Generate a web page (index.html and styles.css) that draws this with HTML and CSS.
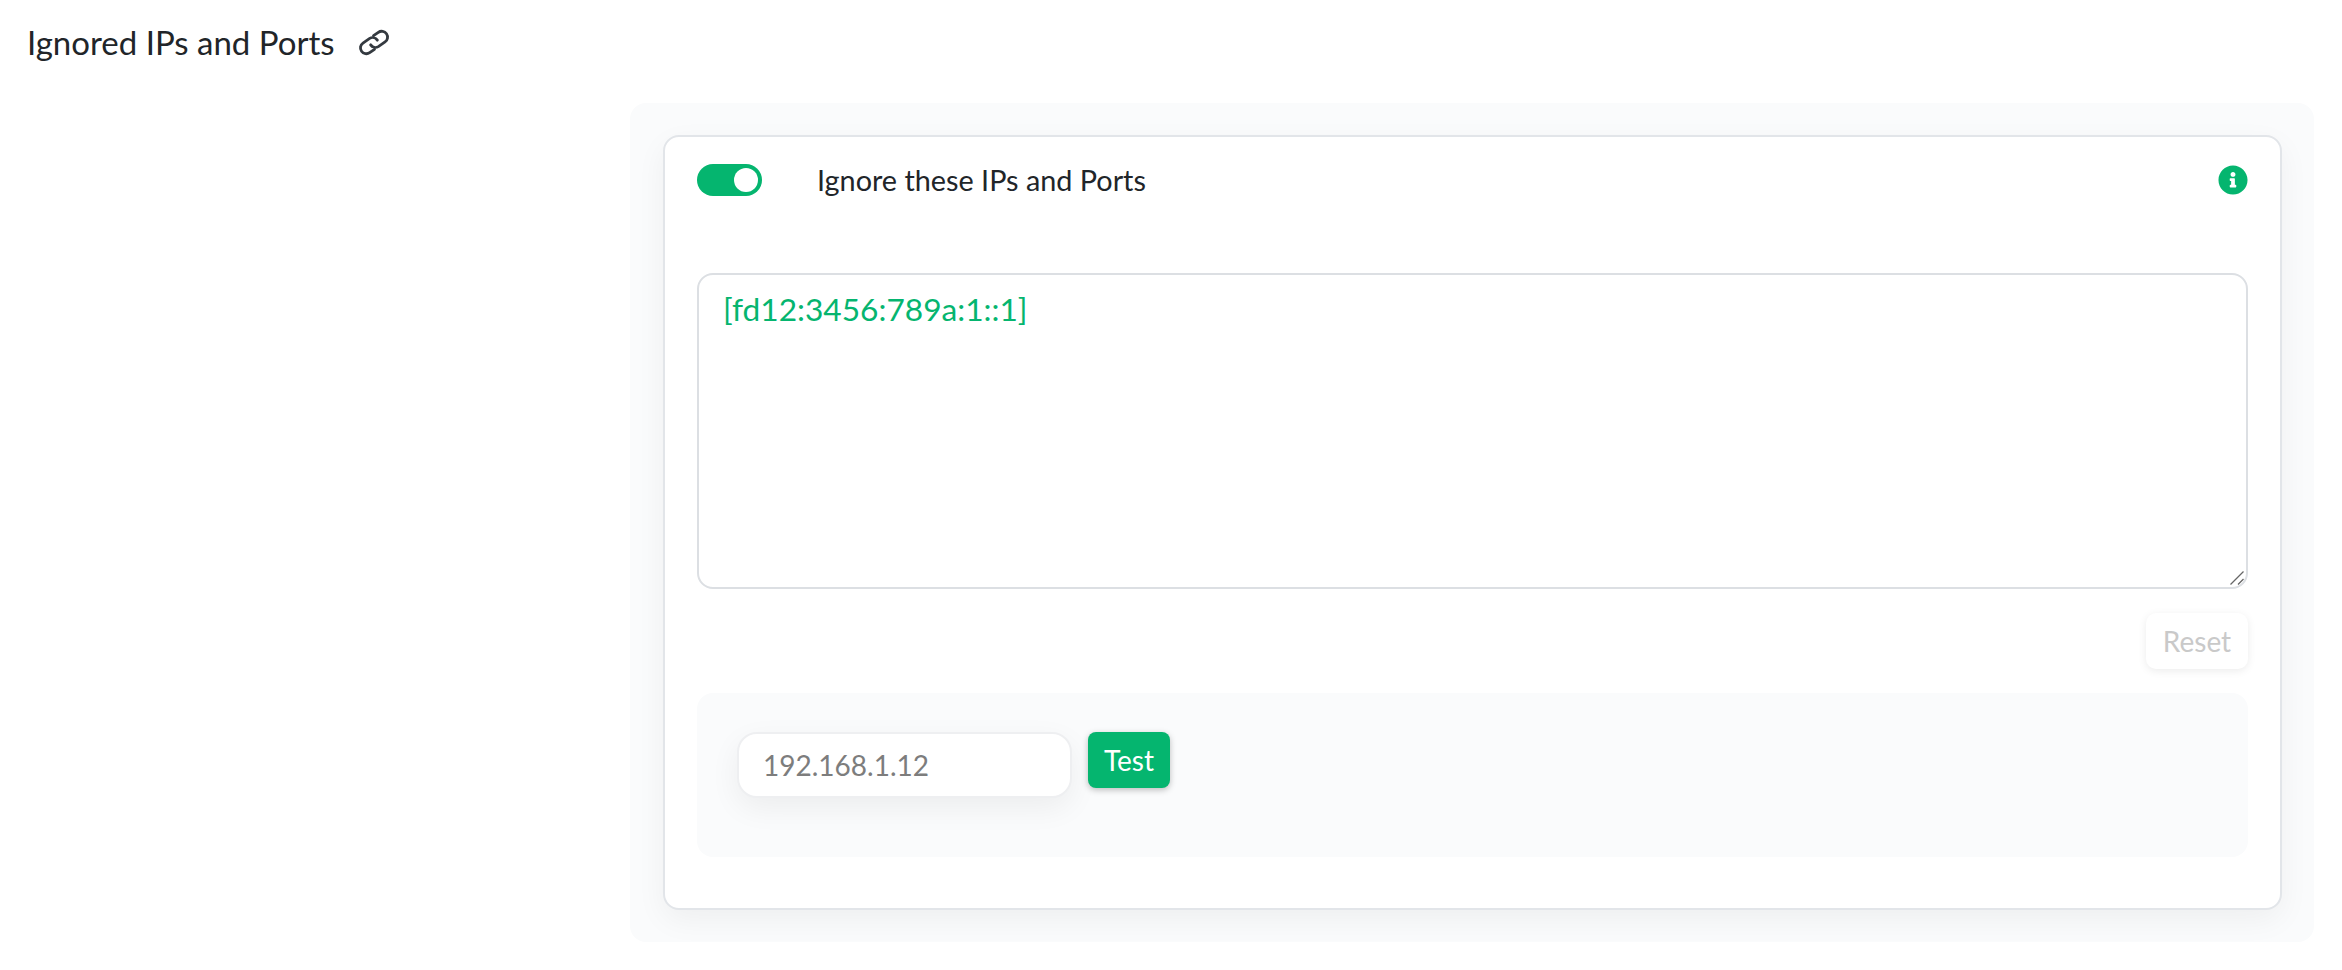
FILE: index.html
```html
<!DOCTYPE html>
<html lang="en">
<head>
  <meta charset="UTF-8">
  <title>Ignored IPs and Ports</title>
  <link rel="stylesheet" href="styles.css">
</head>
<body>
  <div class="heading">
    <h2>Ignored IPs and Ports</h2>
    <a class="anchor" href="#">
      <svg viewBox="-14.500 -11.500 29 23" width="34" height="27">
        <g transform="rotate(-35)" fill="none" stroke="#343a40" stroke-width="2.400" stroke-linecap="round">
          <path d="M3.500 0A5 5 0 0 0-1-5H-8A5 5 0 0 0-8 5H-3"/>
          <path d="M-3.500 0A5 5 0 0 0 1 5H8A5 5 0 0 0 8-5H3"/>
        </g>
      </svg>
    </a>
  </div>

  <div class="panel">
    <div class="card">
      <div class="option-row">
        <label class="toggle"><span class="toggle-knob"></span></label>
        <span class="option-label">Ignore these IPs and Ports</span>
        <svg class="info-icon" viewBox="0 0 512 512" width="30" height="30"><path fill="#05b56f" d="M256 8C119 8 8 119.100 8 256c0 137 111 248 248 248s248-111 248-248C504 119.100 393 8 256 8zm0 110c23.200 0 42 18.800 42 42s-18.800 42-42 42-42-18.800-42-42 18.800-42 42-42zm56 254c0 6.600-5.400 12-12 12h-88c-6.600 0-12-5.400-12-12v-24c0-6.600 5.400-12 12-12h12v-64h-12c-6.600 0-12-5.400-12-12v-24c0-6.600 5.400-12 12-12h64c6.600 0 12 5.400 12 12v100h12c6.600 0 12 5.400 12 12v24z"/></svg>
      </div>

      <div class="ip-wrap">
        <textarea class="ip-list" spellcheck="false">[fd12:3456:789a:1::1]</textarea>
        <svg class="grip" viewBox="0 0 14 14" width="14" height="14">
          <path d="M0.500 13.500L13.500 0.500M8 13.500L13.500 8" stroke="#666" stroke-width="1.300" fill="none"/>
        </svg>
      </div>

      <div class="actions">
        <button class="btn-reset" disabled>Reset</button>
      </div>

      <div class="test-box">
        <input class="test-input" type="text" placeholder="192.168.1.12">
        <button class="btn-test">Test</button>
      </div>
    </div>
  </div>
</body>
</html>
```

FILE: styles.css
```css
body {
  margin: 0;
  background: #fff;
  color: #212529;
  font-family: 'Lato', sans-serif;
}

.heading {
  display: flex;
  align-items: center;
  gap: 22px;
  padding-left: 27px;
  height: 84px;
  margin-bottom: 19px;
}

.heading h2 {
  margin: 0;
  font-size: 33px;
  font-weight: 400;
  line-height: 40px;
}

.anchor {
  display: flex;
}

.panel {
  margin: 0 28px 0 630px;
  padding: 32px 32px 32px 33px;
  background: #fafbfc;
  border-radius: 16px;
  overflow: hidden;
}

.card {
  background: #fff;
  border: 2px solid #e2e5e9;
  border-radius: 16px;
  padding: 27px 32px 51px;
  box-shadow: 0 10px 30px rgba(0, 0, 0, 0.05);
}

.option-row {
  display: flex;
  align-items: center;
  height: 32px;
  margin-bottom: 77px;
}

.toggle {
  position: relative;
  display: block;
  width: 65px;
  height: 32px;
  border-radius: 16px;
  background: #05b56f;
}

.toggle-knob {
  position: absolute;
  top: 4px;
  right: 4px;
  width: 24px;
  height: 24px;
  border-radius: 50%;
  background: #fff;
}

.option-label {
  margin-left: 55px;
  font-size: 28.800px;
}

.info-icon {
  margin-left: auto;
}

.ip-wrap {
  position: relative;
}

.ip-list {
  display: block;
  width: 100%;
  height: 316px;
  box-sizing: border-box;
  padding: 14px 24px;
  border: 2px solid #dcdfe3;
  border-radius: 16px;
  outline: none;
  resize: none;
  color: #05b56f;
  font-family: 'Lato', sans-serif;
  font-size: 31.700px;
  line-height: 40px;
}

.grip {
  position: absolute;
  right: 4px;
  bottom: 4px;
  pointer-events: none;
}

.actions {
  display: flex;
  justify-content: flex-end;
  margin: 24px 0;
}

.btn-reset {
  width: 102px;
  height: 56px;
  border: none;
  border-radius: 10px;
  background: #fff;
  color: #c9c9c9;
  font-family: 'Lato', sans-serif;
  font-size: 28px;
  box-shadow: 0 2px 8px rgba(0, 0, 0, 0.08);
}

.test-box {
  display: flex;
  align-items: flex-start;
  gap: 16px;
  height: 164px;
  box-sizing: border-box;
  padding: 39px 40px;
  background: #fafbfc;
  border-radius: 16px;
}

.test-input {
  width: 335px;
  height: 66px;
  box-sizing: border-box;
  padding: 0 24px;
  border: 2px solid #eeeff1;
  border-radius: 20px;
  outline: none;
  font-family: 'Lato', sans-serif;
  font-size: 28px;
  box-shadow: 0 10px 30px rgba(0, 0, 0, 0.06);
}

.test-input::placeholder {
  color: #7d7d7d;
}

.btn-test {
  width: 82px;
  height: 56px;
  border: none;
  border-radius: 8px;
  background: #05b56f;
  color: #fff;
  font-family: 'Lato', sans-serif;
  font-size: 28px;
  box-shadow: 0 2px 6px rgba(0, 0, 0, 0.25);
}
```
